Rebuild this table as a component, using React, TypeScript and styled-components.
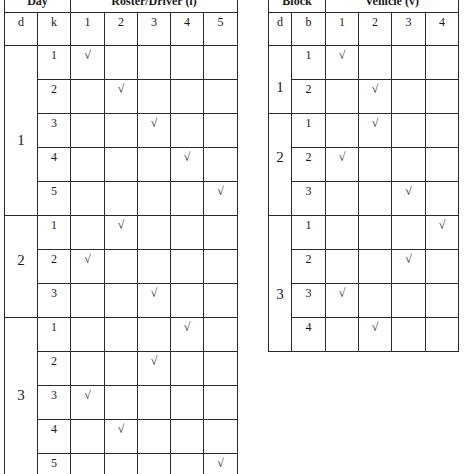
import React from 'react';
import styled, { createGlobalStyle } from 'styled-components';

const GlobalStyle = createGlobalStyle`
  html, body {
    margin: 0;
    padding: 0;
    background: #fff;
  }
  body {
    font-family: "Liberation Serif", "Times New Roman", serif;
    color: #1a1a1a;
  }
`;

const Page = styled.div`
  width: 474px;
  height: 474px;
  overflow: hidden;
  display: flex;
  align-items: flex-start;
  gap: 30px;
  padding-left: 4px;
  box-sizing: border-box;
`;

const Table = styled.table`
  border-collapse: collapse;
  table-layout: fixed;
  margin-top: -12px;
  flex-shrink: 0;
`;

const Col = styled.col<{ $w: number }>`
  width: ${(p) => p.$w}px;
`;

const HeadCell = styled.th`
  height: 18px;
  padding: 5px 0 0;
  border: 1px solid #2a2a2a;
  font-size: 12px;
  font-weight: bold;
  text-align: center;
  vertical-align: top;
`;

const SubCell = styled.td`
  height: 30px;
  padding: 2px 0 0;
  border: 1px solid #2a2a2a;
  font-size: 12px;
  text-align: center;
  vertical-align: top;
`;

const Cell = styled.td`
  height: 31px;
  padding: 2px 0 0;
  border: 1px solid #2a2a2a;
  font-size: 12px;
  text-align: center;
  vertical-align: top;
`;

const Tick = styled.span`
  font-size: 12px;
  color: #2a2a2a;
`;

const GroupCell = styled.td<{ $nudge: number }>`
  padding: ${(p) => (p.$nudge > 0 ? `${p.$nudge * 2}px 0 0` : `0 0 ${-p.$nudge * 2}px`)};
  border: 1px solid #2a2a2a;
  font-size: 15px;
  text-align: center;
  vertical-align: middle;
`;

const Sliver = styled.div`
  margin-left: -15px;
  width: 2px;
  height: 7px;
  border-left: 1px solid #555;
`;

type Group = { id: number; nudge: number; picks: number[] };

const days: Group[] = [
  { id: 1, nudge: 10, picks: [1, 2, 3, 4, 5] },
  { id: 2, nudge: -6, picks: [2, 1, 3] },
  { id: 3, nudge: -7, picks: [4, 3, 1, 2, 5] },
];

const blocks: Group[] = [
  { id: 1, nudge: 8, picks: [1, 2] },
  { id: 2, nudge: -7, picks: [2, 1, 3] },
  { id: 3, nudge: 11, picks: [4, 3, 1, 2] },
];

type GridProps = {
  widths: number[];
  groupTitle: string;
  pickTitle: string;
  groupKey: string;
  rowKey: string;
  count: number;
  groups: Group[];
};

const Grid: React.FC<GridProps> = ({ widths, groupTitle, pickTitle, groupKey, rowKey, count, groups }) => {
  const cols = Array.from({ length: count }, (_, i) => i + 1);
  return (
    <Table>
      <colgroup>
        {widths.map((w, i) => (
          <Col key={i} $w={w} />
        ))}
      </colgroup>
      <thead>
        <tr>
          <HeadCell colSpan={2}>{groupTitle}</HeadCell>
          <HeadCell colSpan={count}>{pickTitle}</HeadCell>
        </tr>
      </thead>
      <tbody>
        <tr>
          <SubCell>{groupKey}</SubCell>
          <SubCell>{rowKey}</SubCell>
          {cols.map((c) => (
            <SubCell key={c}>{c}</SubCell>
          ))}
        </tr>
        {groups.map((g) =>
          g.picks.map((pick, r) => (
            <tr key={`${g.id}-${r}`}>
              {r === 0 && (
                <GroupCell rowSpan={g.picks.length} $nudge={g.nudge}>
                  {g.id}
                </GroupCell>
              )}
              <Cell>{r + 1}</Cell>
              {cols.map((c) => (
                <Cell key={c}>{c === pick && <Tick>√</Tick>}</Cell>
              ))}
            </tr>
          ))
        )}
      </tbody>
    </Table>
  );
};

const App: React.FC = () => (
  <>
    <GlobalStyle />
    <Page>
      <Grid
        widths={[33, 33, 34, 33, 33, 33, 34]}
        groupTitle="Day"
        pickTitle="Roster/Driver (i)"
        groupKey="d"
        rowKey="k"
        count={5}
        groups={days}
      />
      <Grid
        widths={[23, 34, 33, 33, 34, 33]}
        groupTitle="Block"
        pickTitle="Vehicle (v)"
        groupKey="d"
        rowKey="b"
        count={4}
        groups={blocks}
      />
      <Sliver />
    </Page>
  </>
);

export default App;
